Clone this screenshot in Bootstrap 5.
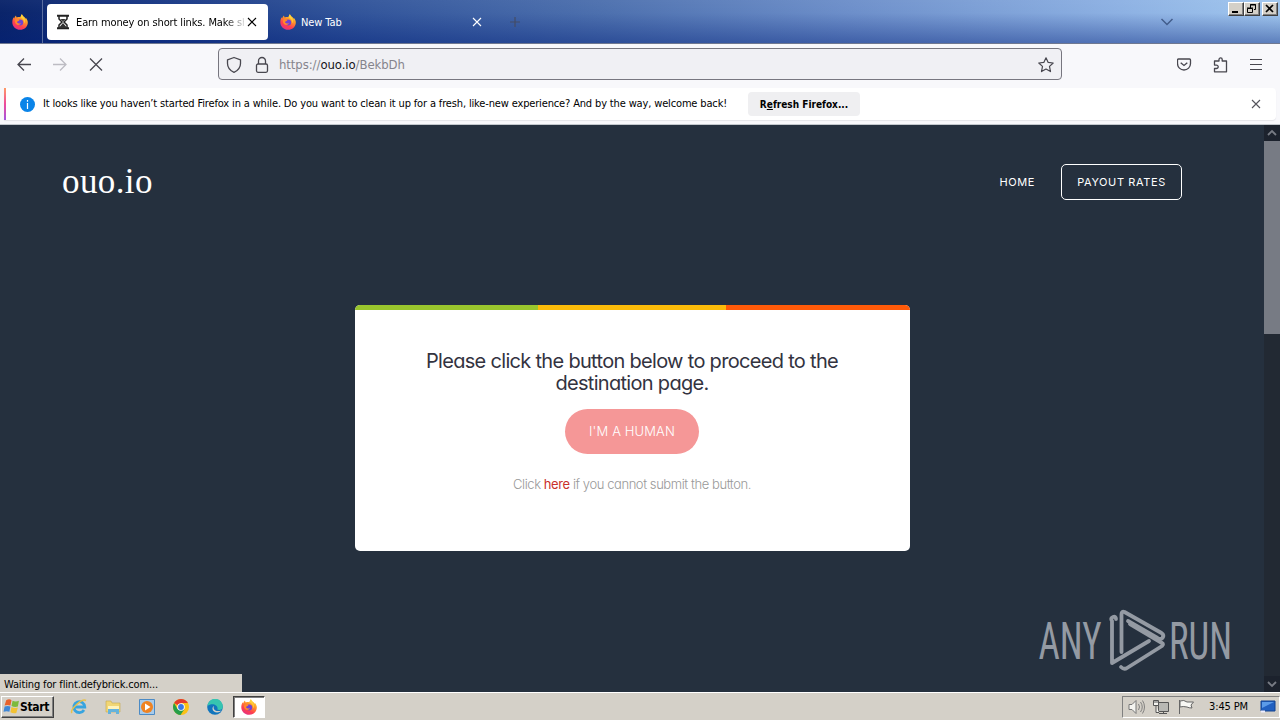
<!DOCTYPE html>
<html lang="en">
<head>
    <meta charset="UTF-8">
    <meta name="viewport" content="width=device-width, initial-scale=1.0">
    <title>ouo.io</title>
    <link rel="stylesheet" href="https://cdn.jsdelivr.net/npm/bootstrap@5.3.0/dist/css/bootstrap.min.css">
    <style>
        body { width: 1280px; height: 720px; overflow: hidden; font-family: "DejaVu Sans Condensed", "DejaVu Sans", sans-serif; font-stretch: condensed; font-size: 11px; line-height: 14px; color: #000; background: #25303e; }
        svg { display: block; flex: none; }
        .ui-text { white-space: nowrap; }

        /* Browser chrome */
        .tab-strip { height: 44px; border-bottom: 1px solid #6f7890; background: linear-gradient(180deg, rgba(255,255,255,.03), rgba(255,255,255,0) 30%, rgba(0,30,120,.42)), linear-gradient(90deg, #0a246a 0, #183784 150px, #31549a 350px, #4d70ae 600px, #6d8fca 850px, #8db1e3 1120px, #a0c6ee 1280px); }
        .pinned { width: 43px; border-right: 1px solid #5a6ea0; padding-left: 12px; }
        .tab-active { width: 221px; height: 36px; margin: 4px 0 0 4px; padding: 0 11px 0 9px; background: #fff; border-radius: 4px; }
        .tab-name { width: 168px; margin-left: 6px; padding-top: 2px; white-space: nowrap; letter-spacing: -.12px; -webkit-mask-image: linear-gradient(90deg, #000 148px, transparent 172px); mask-image: linear-gradient(90deg, #000 148px, transparent 172px); }
        .tab-other { width: 220px; color: #fff; padding: 0 6px 0 12px; }
        .tab-other span { margin-left: 5px; padding-top: 3px; letter-spacing: -.1px; }
        .tab-plus { margin-left: 22px; }
        .tab-list { margin: 17px 54px 0 0; }
        .win-btns { padding: 2px 2px 0 0; }
        .win-btn { width: 16px; height: 14px; background: #d4d0c8; border: 1px solid; border-color: #fff #404040 #404040 #fff; box-shadow: inset -1px -1px #808080; }
        .win-close { margin-left: 2px; }
        .toolbar-nav { height: 44px; padding-bottom: 4px; background: #f8f8fb; color: #48474f; }
        .url-box { width: 844px; height: 32px; margin-left: 114px; border: 1px solid #77767f; border-radius: 4px; background: #f0f0f4; color: #85848c; font-size: 13px; padding: 2px 7px 0; }
        .url-box span { letter-spacing: -.07px; margin-left: 7px; }
        .url-box b { font-weight: 400; color: #15141a; }
        .tools { gap: 20px; margin: 1px 17px 0 0; }
        .notice-wrap { height: 37px; background: #f8f8fb; border-bottom: 1px solid #c3c8cd; padding-left: 4px; }
        .notice { width: 1272px; height: 32px; background: #fff; border-radius: 0 4px 4px 0; box-shadow: 0 1px 1px #e4e4e8; }
        .notice-edge { width: 2px; height: 32px; margin-right: 14px; background: linear-gradient(#ff9a66, #ee4a9a 50%, #a354df); }
        .notice .ui-text { width: 705px; letter-spacing: -.148px; }
        .notice-close { margin: 0 15px 0 auto; color: #55545c; }
        .btn-refresh { width: 112px; height: 24px; background: #efeff1; border-radius: 4px; padding: 0; font-size: 10px; font-weight: 700; line-height: 25px; color: #000; border: 0; }

        /* Page */
        .page-view { height: 567px; background: #25303e; }
        .page-body { width: 1264px; }
        .site-font { font-family: Inter, "Open Sans", sans-serif; font-feature-settings: "cv11"; font-stretch: normal; }
        .site-head { height: 114px; padding: 0 82px 0 62px; color: #fff; }
        .site-name { font-family: "Liberation Serif", serif; font-size: 35px; letter-spacing: .4px; line-height: 40px; color: #fff; }
        .menu-item { font-size: 11px; letter-spacing: .6px; }
        .menu-boxed { width: 121px; height: 36px; margin-left: 26px; border: 1px solid #fff; border-radius: 5px; line-height: 34px; text-align: center; }
        .gate { width: 555px; height: 246px; margin: 66px 0 0 355px; background: #fff; border-radius: 5px; overflow: hidden; color: #33333f; }
        .stripe { height: 5px; }
        .stripe-green { width: 183px; background: #99c52d; }
        .stripe-yellow { width: 188px; background: #fbbb0a; }
        .stripe-orange { width: 184px; background: #ff5a09; }
        .gate h1 { font-size: 20px; line-height: 22px; font-weight: 400; letter-spacing: -.69px; margin: 40px 1px 15px 0; }
        .btn-human { width: 134px; height: 45px; margin-right: 1px; border: 0; border-radius: 23px; background: #f59797; color: #fff; font-size: 13px; letter-spacing: .12px; padding: 0; font-weight: 300; }
        .gate p { font-size: 13px; line-height: 18px; letter-spacing: -.42px; margin: 21px 1px 0 0; color: #999; font-weight: 300; }
        .gate a { color: #c9302c; text-decoration: none; font-weight: 400; }
        .scroll-col { width: 16px; background: #222933; }
        .scroll-end { height: 16px; background: #1c222d; }
        .scroll-thumb { height: 193px; background: #777b84; }
        .watermark { position: absolute; left: 1036px; top: 482px; overflow: visible; }
        .status-tip { position: absolute; left: 0; bottom: 0; width: 242px; height: 18px; padding: 4px 4px 0; letter-spacing: -.14px; background: #d4d0c8; }

        /* Taskbar */
        .taskbar { height: 28px; background: #d4d0c8; border-top: 1px solid #fff; box-shadow: 0 -1px #d4d0c8; }
        .btn-start { width: 53px; height: 22px; border: 1px solid; border-color: #fff #404040 #404040 #fff; box-shadow: inset -1px -1px #808080; font-weight: 700; font-size: 12px; letter-spacing: -.34px; padding: 0 3px 0 1px; margin-left: 1px; }
        .task-icon { width: 34px; }
        .task-open { width: 32px; height: 22px; margin-left: 1px; background: #fff; border: 1px solid; border-color: #404040 #fff #fff #404040; box-shadow: inset 1px 1px #808080; }
        .tray { width: 158px; height: 22px; border: 1px solid; border-color: #808080 #fff #fff #808080; padding: 0 3px 0 5px; }
        .tray .ui-text { margin-left: 14px; padding-top: 1px; letter-spacing: -.12px; }
    </style>
</head>
<body>
    <svg width="0" height="0" class="position-absolute">
        <defs>
            <linearGradient id="fire" x1=".8" y1="0" x2=".25" y2="1">
                <stop offset="0" stop-color="#ffe53b"/><stop offset=".35" stop-color="#ff9a27"/><stop offset=".7" stop-color="#ff3f4e"/><stop offset="1" stop-color="#e0308a"/>
            </linearGradient>
            <symbol id="fox" viewBox="0 0 16 16">
                <path d="M8.2 3.2C9 2.4 9 1.2 9.9.2c.4 1.300 1.300 1.800 2 2.600 1.100.7 1.400 1.200 1.700 1.900l.4-.8C15.300 5.400 16 7.200 15.800 9c-.4 4-3.600 6.800-7.600 6.800C3.900 15.800.3 12.500.3 8.200c0-1.900.5-3.600 1.500-5l.3 1.200C2.500 3.200 3.100 2.200 4 1.600c0 .8.3 1.400.8 1.800 1.200-.5 2.300-.6 3.400-.2z" fill="url(#fire)"/>
                <circle cx="8.200" cy="8.500" r="3" fill="#7043d4"/>
                <path d="M3.400 5.700c1.500-.7 3-.3 4 .7-1 .7-2.300.7-2.500 1.700.5 1.700 2.400 1.700 4.100.9-.5 1.700-3.400 3-5.200.8-.9-1.200-1-2.700-.4-4.100z" fill="#ff8a2a"/>
                <path d="M8.500 3.500c3 .7 4.200 3.500 3.200 6.300 1.600-1.300 1.500-4 .3-5.800L9.900.2c-1 1-.9 2.300-1.400 3.300z" fill="#ffd13a"/>
            </symbol>
            <symbol id="cross" viewBox="0 0 10 10"><path d="M1 1l8 8M9 1L1 9" fill="none" stroke="currentColor" stroke-width="1.100"/></symbol>
        </defs>
    </svg>

    <!-- Tabs -->
    <div class="tab-strip d-flex">
        <div class="pinned d-flex align-items-center"><svg width="16" height="16"><use href="#fox"/></svg></div>
        <div class="tab-active d-flex align-items-center">
            <svg width="14" height="16" viewBox="0 0 14 16"><path d="M1 1.800h12M1 14.200h12" stroke="#222" stroke-width="2"/><path d="M3 2v3l3 3-3 3v3M11 2v3L8 8l3 3v3" fill="none" stroke="#222" stroke-width="1.500"/><path d="M4.500 5h5L7 7.500zM7 9l3 3.500v1.500H4v-1.500z" fill="#333"/></svg>
            <div class="tab-name">Earn money on short links. Make sh</div>
            <svg width="10" height="10" class="ms-auto"><use href="#cross"/></svg>
        </div>
        <div class="tab-other d-flex align-items-center">
            <svg width="16" height="16"><use href="#fox"/></svg>
            <span class="ui-text">New Tab</span>
            <svg width="10" height="10" class="ms-auto"><use href="#cross"/></svg>
        </div>
        <svg width="10" height="10" viewBox="0 0 10 10" class="tab-plus align-self-center"><path d="M5 0v10M0 5h10" stroke="#444c66" stroke-width="1.200"/></svg>
        <div class="ms-auto d-flex">
            <svg width="14" height="9" viewBox="0 0 14 9" class="tab-list"><path d="M1.500 2L7 7.500 12.500 2" fill="none" stroke="#435d8b" stroke-width="1.500"/></svg>
            <div class="win-btns d-flex align-items-start">
                <div class="win-btn"><svg width="14" height="12"><path d="M3 9h6" stroke="#000" stroke-width="2"/></svg></div>
                <div class="win-btn"><svg width="14" height="12"><path d="M5.500 5V1.500h5v5H9M5 2h6M2.500 5.500h5v4h-5zM2 5h6" fill="none" stroke="#000"/></svg></div>
                <div class="win-btn win-close"><svg width="14" height="12"><path d="M3 2l7 7M10 2L3 9" stroke="#000" stroke-width="1.700"/></svg></div>
            </div>
        </div>
    </div>

    <!-- Address bar -->
    <div class="toolbar-nav d-flex align-items-center">
        <svg width="104" height="16" viewBox="0 0 104 16" fill="none" stroke="currentColor" stroke-width="1.300"><path d="M31 8.500H18M24 2.500l-6 6 6 6"/><path d="M53 8.500h13M60 2.500l6 6-6 6" stroke="#bdbcc3"/><path d="M90 2.500l12 12M102 2.500l-12 12"/></svg>
        <div class="url-box d-flex align-items-center">
            <svg width="46" height="18" viewBox="0 0 46 18" fill="none" stroke="#48474f" stroke-width="1.300"><path d="M8 1.500l6.500 2.300v3.700c0 4-2.500 7-6.500 8.800-4-1.800-6.500-4.800-6.500-8.800V3.800z" stroke-linejoin="round"/><rect x="30.500" y="8" width="11" height="8.300" rx="1.500"/><path d="M32.500 8V5a3.500 3.500 0 0 1 7 0v3"/></svg>
            <span class="ui-text">https://<b>ouo.io</b>/BekbDh</span>
            <svg width="16" height="16" viewBox="0 0 16 16" class="ms-auto"><path d="M8 .8l2.200 4.600 5 .6-3.700 3.400 1 5.200L8 12l-4.500 2.600 1-5.200L.8 6l5-.6z" fill="none" stroke="#48474f" stroke-width="1.200" stroke-linejoin="round"/></svg>
        </div>
        <div class="tools ms-auto d-flex">
            <svg width="16" height="16" viewBox="0 0 16 16" fill="none" stroke="currentColor" stroke-width="1.300"><path d="M1.500 2h11q1 0 1 1v3.500a6.500 6.500 0 0 1-13 0V3q0-1 1-1z"/><path d="M3.700 5.700L7 8.500l3.300-2.800"/></svg>
            <svg width="16" height="16" viewBox="0 0 16 16" fill="none" stroke="currentColor" stroke-width="1.300"><path d="M1.500 6.500V4H6V2.500a1.600 1.600 0 0 1 3.200 0V4h4.300v10.800h-12v-3.300h2a1.700 1.700 0 0 0 0-3.400h-2z" stroke-linejoin="round"/></svg>
            <svg width="14" height="16" viewBox="0 0 14 16"><path d="M1 2.500h12M1 7.500h12M1 12.500h12" stroke="currentColor" stroke-width="1.200"/></svg>
        </div>
    </div>

    <!-- Refresh notification -->
    <div class="notice-wrap">
        <div class="notice d-flex align-items-center">
            <div class="notice-edge"></div>
            <svg width="15" height="15" viewBox="0 0 15 15"><circle cx="7.500" cy="7.500" r="7.500" fill="#0a84e8"/><path d="M7.500 3v1.800M7.500 6v6" stroke="#fff" stroke-width="1.200"/></svg>
            <span class="ui-text ms-2">It looks like you haven’t started Firefox in a while. Do you want to clean it up for a fresh, like-new experience? And by the way, welcome back!</span>
            <button class="btn btn-refresh">R<u>e</u>fresh Firefox...</button>
            <svg width="10" height="10" class="notice-close"><use href="#cross"/></svg>
        </div>
    </div>

    <!-- Page -->
    <div class="page-view position-relative d-flex">
        <div class="page-body site-font">
            <div class="site-head d-flex align-items-center justify-content-between">
                <span class="site-name">ouo.io</span>
                <div class="d-flex align-items-center">
                    <span class="menu-item">HOME</span>
                    <span class="menu-item menu-boxed">PAYOUT RATES</span>
                </div>
            </div>
            <div class="gate text-center">
                <div class="stripe d-flex"><div class="stripe-green"></div><div class="stripe-yellow"></div><div class="stripe-orange"></div></div>
                <h1>Please click the button below to proceed to the<br>destination page.</h1>
                <button class="btn btn-human">I'M A HUMAN</button>
                <p>Click <a href="#">here</a> if you cannot submit the button.</p>
            </div>
        </div>
        <div class="scroll-col d-flex flex-column">
            <div class="scroll-end"><svg width="16" height="16"><path d="M4 10l4-4 4 4" fill="none" stroke="#777b84" stroke-width="1.800"/></svg></div>
            <div class="scroll-thumb"></div>
            <div class="scroll-end mt-auto"><svg width="16" height="16"><path d="M4 6l4 4 4-4" fill="none" stroke="#777b84" stroke-width="1.800"/></svg></div>
        </div>
        <svg class="watermark" width="200" height="68" viewBox="0 0 200 68" font-family="Roboto, sans-serif" font-size="52" fill="#949aa3">
            <text x="2.500" y="52" textLength="63" lengthAdjust="spacingAndGlyphs">ANY</text>
            <text x="133" y="52" textLength="63" lengthAdjust="spacingAndGlyphs">RUN</text>
            <g fill="none" stroke="#949aa3" stroke-width="3.800" stroke-linecap="round" stroke-linejoin="round">
                <path d="M85.500 45V7q0-3 3-2l37 21q3 2 1 5-2 2-5 0L92 14"/>
                <path d="M80 12q0-3-3-2t-1 4v42l37-22"/>
                <path d="M85 60q3 3 6 1l35-22q2-2 0-3L94 17"/>
            </g>
        </svg>
        <div class="status-tip"><span class="ui-text">Waiting for flint.defybrick.com...</span></div>
    </div>

    <!-- Taskbar -->
    <div class="taskbar d-flex align-items-center">
        <div class="btn-start d-flex align-items-center">
            <svg width="17" height="17" viewBox="0 0 16 16"><path d="M3 2q3-1.500 5 0L7 7Q4 6 1.500 7z" fill="#e8622c"/><path d="M9 2.500q3 1.500 6 0L14 8q-3 1-6-.5z" fill="#7dba3c"/><path d="M1.500 8q3-1 5.500 0l-1 5q-2.500-1-5.500 0z" fill="#3f87d6"/><path d="M8 8.500q3 1.500 6 .5l-1.500 5q-2.500 1-5.500-.5z" fill="#f3c233"/></svg>
            <span>Start</span>
        </div>
        <div class="d-flex align-items-center ms-2">
            <div class="task-icon d-flex justify-content-center"><svg width="18" height="18" viewBox="0 0 18 18"><path d="M14 12a5.500 5.500 0 1 1 .8-3H5" fill="none" stroke="#37a4df" stroke-width="2.800"/><path d="M2 15C-1 12 12 0 16 2.500" fill="none" stroke="#e8c14b" stroke-width="1.500"/></svg></div>
            <div class="task-icon d-flex justify-content-center"><svg width="18" height="18" viewBox="0 0 18 18"><path d="M2 3h5l1 2h8v9H2z" fill="#f1d675" stroke="#c8a94a" stroke-width=".6"/><path d="M4 8h11v3H4z" fill="#fff3bb"/><path d="M4 16v-5h11v5h-3v-2H7v2z" fill="#65b3dc"/></svg></div>
            <div class="task-icon d-flex justify-content-center"><svg width="18" height="18" viewBox="0 0 18 18"><path d="M1.500 1.500h15v15h-15z" fill="#a8cbea" stroke="#4c8bc5"/><circle cx="9" cy="9" r="6" fill="#ef8322"/><path d="M7 5.500L12.500 9 7 12.500z" fill="#fff"/></svg></div>
            <div class="task-icon d-flex justify-content-center"><svg width="16" height="16" viewBox="0 0 16 16"><circle cx="8" cy="8" r="8" fill="#fbc116"/><path d="M1.100 4A8 8 0 0 1 14.900 4H8v4z" fill="#e33b2e"/><path d="M1.100 4A8 8 0 0 0 7.500 16L11.500 10H4.500z" fill="#269e4a"/><circle cx="8" cy="8" r="3.800" fill="#fff"/><circle cx="8" cy="8" r="2.900" fill="#3978e6"/></svg></div>
            <div class="task-icon d-flex justify-content-center"><svg width="16" height="16" viewBox="0 0 16 16"><circle cx="8" cy="8" r="7.800" fill="#1175bd"/><path d="M.4 7A7.700 7.700 0 0 1 15.800 8c0 2.500-3 3.500-5.500 2.500C12 6 5 3 .4 7z" fill="#36c5b0"/><path d="M7 7c-1.500 3 1.500 6.500 7.500 4.500C12 14.500 6 14 5.500 10 5.300 8.500 6 7.500 7 7z" fill="#d4d0c8"/></svg></div>
            <div class="task-open d-flex align-items-center justify-content-center"><svg width="16" height="16"><use href="#fox"/></svg></div>
        </div>
        <div class="tray d-flex align-items-center ms-auto">
            <svg width="17" height="16" viewBox="0 0 17 16" fill="#f4f4f0" stroke="#777"><path d="M1 5.500h3l4-4v13l-4-4H1z"/><path d="M10.500 5q2 3 0 6M12.500 3q3.500 5 0 10M14.500 1.500q4 6.500 0 13" fill="none" stroke-width=".9"/></svg>
            <svg width="17" height="16" viewBox="0 0 17 16" class="ms-2" fill="#f4f4f0" stroke="#555"><path d="M5.500 3.500h10v9h-10z" fill="#b8b8b4"/><path d="M6 14.500h8M10.500 13v1"/><path d="M.5 1.500h5v5h-5zM3 6.500v7h3M2 1v3M4 1v3"/></svg>
            <svg width="17" height="16" viewBox="0 0 17 16" class="ms-2" fill="#f8f8f4" stroke="#666"><path d="M1.500 1v14M2 2q4-1.500 7 1h6.500l-2.500 3 1 3q-3 0-5-1-4-1-7 0z"/></svg>
            <span class="ui-text">3:45 PM</span>
            <svg width="16" height="14" viewBox="0 0 16 14" class="ms-auto"><path d="M1 1h14v10H1z" fill="#2260c0" stroke="#13428f"/><path d="M2 2h12L2 8z" fill="#5c9be8"/><path d="M1 11.500h4" stroke="#eef" stroke-width="2"/></svg>
        </div>
    </div>
    <script src="https://cdn.jsdelivr.net/npm/bootstrap@5.3.0/dist/js/bootstrap.bundle.min.js"></script>
</body>
</html>
